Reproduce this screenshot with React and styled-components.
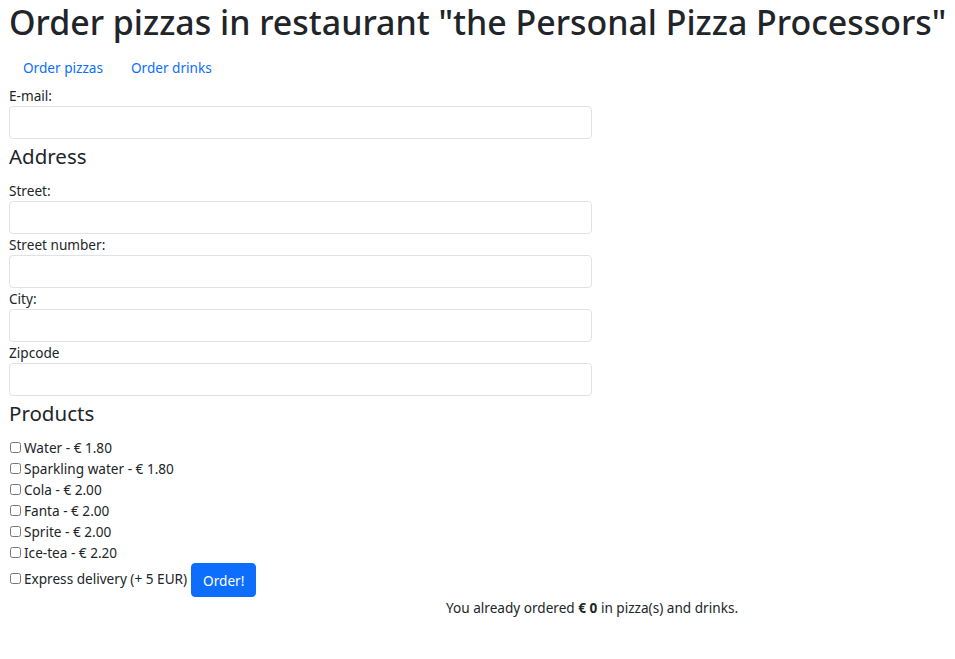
import React from 'react';
import styled, { createGlobalStyle } from 'styled-components';

const GlobalStyle = createGlobalStyle`
	body {
		margin: 0;
		font-family: 'Noto Sans', 'Open Sans', sans-serif;
		font-size: 13.6px;
		line-height: 21px;
		color: #212529;
		background: #fff;
	}
`;

const Page = styled.div`
	padding: 0 0 0 9px;
`;

const Title = styled.h1`
	margin: 0 0 7px;
	padding-top: 1px;
	font-size: 33.9px;
	font-weight: 500;
	line-height: 42px;
	white-space: nowrap;
`;

const Nav = styled.ul`
	display: flex;
	list-style: none;
	margin: 0;
	padding: 0;
`;

const NavLink = styled.a`
	display: block;
	padding: 7px 14px;
	color: #0d6efd;
	text-decoration: none;
`;

const Form = styled.form`
	width: 583px;
`;

const Label = styled.label`
	display: block;
`;

const Input = styled.input`
	display: block;
	width: 100%;
	height: 33px;
	box-sizing: border-box;
	border: 1px solid #dee2e6;
	border-radius: 4px;
	font: inherit;
	padding: 5px 11px;
`;

const SectionTitle = styled.h3`
	margin: 0 0 7px;
	font-size: 20.5px;
	font-weight: 400;
	line-height: 34px;
`;

const CheckRow = styled.div`
	display: flex;
	align-items: center;
`;

const CheckLabel = styled.label`
	display: flex;
	align-items: center;
	margin-bottom: ${(props) => (props.raised ? '4px' : '0')};
`;

const Check = styled.input.attrs({ type: 'checkbox' })`
	width: 11px;
	height: 11px;
	margin: 0 3px 0 1px;
`;

const Button = styled.button`
	margin-left: 4px;
	height: 34px;
	padding: 0 11px;
	border: 1px solid #0d6efd;
	border-radius: 4px;
	background: #0d6efd;
	color: #fff;
	font: inherit;
`;

const Footer = styled.p`
	margin: 0;
	padding-left: 437px;
`;

const fields = [
	{ label: 'Street:', name: 'street' },
	{ label: 'Street number:', name: 'streetnumber' },
	{ label: 'City:', name: 'city' },
	{ label: 'Zipcode', name: 'zipcode' },
];

const products = [
	'Water - € 1.80',
	'Sparkling water - € 1.80',
	'Cola - € 2.00',
	'Fanta - € 2.00',
	'Sprite - € 2.00',
	'Ice-tea - € 2.20',
];

function App() {
	return (
		<Page>
			<GlobalStyle />
			<Title>Order pizzas in restaurant "the Personal Pizza Processors"</Title>
			<Nav>
				<li>
					<NavLink href="#">Order pizzas</NavLink>
				</li>
				<li>
					<NavLink href="#">Order drinks</NavLink>
				</li>
			</Nav>
			<Form onSubmit={(e) => e.preventDefault()}>
				<Label htmlFor="email">E-mail:</Label>
				<Input id="email" type="text" />
				<SectionTitle>Address</SectionTitle>
				{fields.map((f) => (
					<div key={f.name}>
						<Label htmlFor={f.name}>{f.label}</Label>
						<Input id={f.name} type="text" />
					</div>
				))}
				<SectionTitle>Products</SectionTitle>
				{products.map((p) => (
					<CheckRow key={p}>
						<CheckLabel>
							<Check />
							{p}
						</CheckLabel>
					</CheckRow>
				))}
				<CheckRow>
					<CheckLabel raised>
						<Check />
						Express delivery (+ 5 EUR)
					</CheckLabel>
					<Button type="submit">Order!</Button>
				</CheckRow>
			</Form>
			<Footer>
				You already ordered <strong>€ 0</strong> in pizza(s) and drinks.
			</Footer>
		</Page>
	);
}

export default App;
